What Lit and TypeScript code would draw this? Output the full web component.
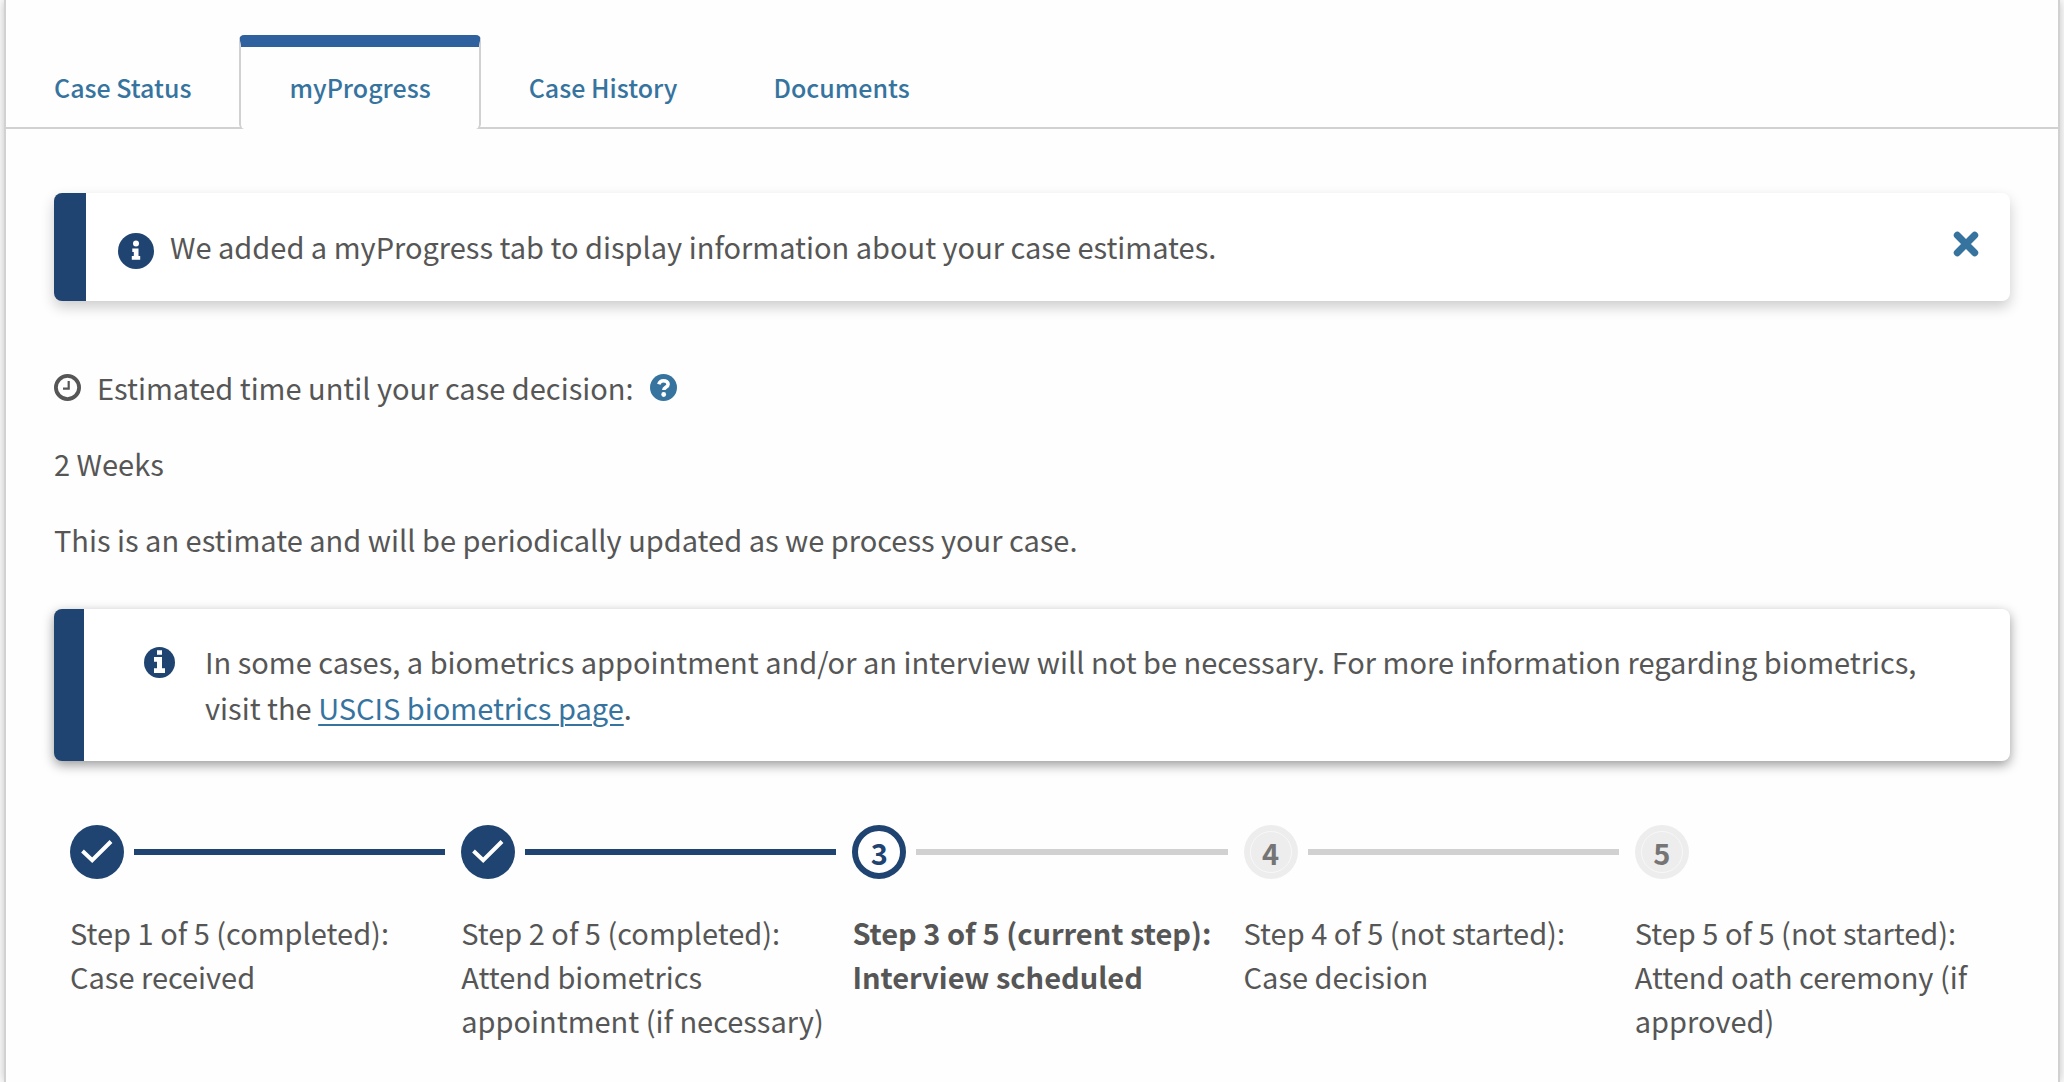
import { LitElement, html, css, svg } from "lit";
import { customElement, property, state } from "lit/decorators.js";

type StepStatus = "completed" | "current" | "not-started";
interface Step { title: string; status: StepStatus; }

const STATUS_LABEL: Record<StepStatus, string> = {
  completed: "completed",
  current: "current step",
  "not-started": "not started",
};

const infoRound = svg`
  <circle cx="18" cy="18" r="18" fill="currentColor"/>
  <circle cx="18" cy="10.5" r="3" fill="#fff"/>
  <path d="M14.300 15.400h6.200v7.600h1.700v3.800h-8.400V23h2v-4h-1.500z" fill="#fff"/>`;

const infoSquare = svg`
  <circle cx="15.500" cy="15.500" r="15.500" fill="currentColor"/>
  <path d="M13 3.300h5v4.400h-5zM10 10h8v11.200h3V26H10v-4.800h3v-6.400h-3z" fill="#fff"/>`;

@customElement("progress-steps")
export class ProgressSteps extends LitElement {
  @property({ attribute: false }) steps: Step[] = [];

  static styles = css`
    :host { display: block; }
    .steps {
      display: grid;
      grid-template-columns: repeat(5, minmax(0, 1fr));
      list-style: none;
      margin: 0;
      padding: 0;
    }
    .step { padding-left: 16px; }
    .track { display: flex; align-items: center; gap: 10px; height: 54px; }
    .dot {
      box-sizing: border-box;
      width: 54px;
      height: 54px;
      flex: none;
      border-radius: 50%;
      display: grid;
      place-items: center;
      font-size: 29px;
      line-height: 42px;
      font-weight: 700;
    }
    .dot.completed { background: #1f4471; }
    .dot.current { border: 6px solid #1f4471; color: #1f4471; background: #fff; }
    .dot.not-started { background: #ededed; color: #757575; }
    .num {
      box-sizing: border-box;
      width: 42px;
      height: 42px;
      border: 1px solid transparent;
      border-radius: 50%;
      line-height: 40px;
      text-align: center;
    }
    .not-started .num { border-color: #f8f8f8; }
    .line { flex: 1; height: 6px; background: #d1d1d1; }
    .line.done { background: #1f4471; }
    .label { margin-top: 31px; font-size: 29px; line-height: 44px; }
    .label.current { font-weight: 700; }
  `;

  render() {
    const total = this.steps.length;
    return html`<ol class="steps">
      ${this.steps.map((s, i) => html`<li class="step">
        <div class="track">
          <span class="dot ${s.status}">${s.status === "completed"
            ? html`<svg width="54" height="54" viewBox="0 0 54 54" aria-hidden="true"><path d="M12.500 26l9.700 9.200L41 16.500" fill="none" stroke="#fff" stroke-width="4"/></svg>`
            : html`<span class="num">${i + 1}</span>`}</span>
          ${i < total - 1 ? html`<span class="line ${s.status === "completed" ? "done" : ""}"></span>` : ""}
        </div>
        <div class="label ${s.status}">Step ${i + 1} of ${total} (${STATUS_LABEL[s.status]}):<br>${s.title}</div>
      </li>`)}
    </ol>`;
  }
}

@customElement("app-root")
export class AppRoot extends LitElement {
  @state() private active = "myProgress";
  @state() private showNotice = true;

  private tabs = ["Case Status", "myProgress", "Case History", "Documents"];
  private steps: Step[] = [
    { title: "Case received", status: "completed" },
    { title: "Attend biometrics appointment (if necessary)", status: "completed" },
    { title: "Interview scheduled", status: "current" },
    { title: "Case decision", status: "not-started" },
    { title: "Attend oath ceremony (if approved)", status: "not-started" },
  ];

  static styles = css`
    :host {
      display: block;
      box-sizing: border-box;
      min-height: 100vh;
      padding: 0 4px;
      background: #fefefe;
      color: #565656;
      font-family: "Noto Sans CJK SC", "Noto Sans", sans-serif;
      font-size: 29px;
      line-height: 46px;
    }
    .card {
      box-sizing: border-box;
      min-height: 100vh;
      border: solid #d1d1d1;
      border-width: 0 2px;
      background: #fefefe;
      box-shadow: 0 0 10px rgba(0, 0, 0, 0.25);
    }
    .tabs {
      display: flex;
      align-items: flex-end;
      padding-top: 35px;
      box-shadow: inset 0 -2px #d1d1d1;
    }
    .tab {
      box-sizing: border-box;
      height: 94px;
      margin: 0;
      padding: 12px 48px 2px;
      border: 0;
      background: none;
      color: #36749f;
      font: 500 25px/40px "Noto Sans CJK SC", "Noto Sans", sans-serif;
      cursor: pointer;
    }
    .tab.active {
      padding-top: 0;
      border: solid #d1d1d1;
      border-width: 12px 2px 0;
      border-top-color: #2e619e;
      border-radius: 5px;
      background: #fefefe;
    }
    .panel { padding: 64px 48px 32px; }
    .notice {
      display: flex;
      align-items: flex-start;
      border-left: 32px solid #1f4471;
      border-radius: 8px;
      background: #fff;
    }
    .notice.new {
      padding: 30px 28px 32px 32px;
      gap: 16px;
      box-shadow: 0 6px 14px rgba(0, 0, 0, 0.2);
    }
    .notice.new .icon { align-self: flex-end; }
    .notice.bio {
      margin: 47px 0 64px;
      border-left-width: 30px;
      padding: 29px 60px 31px;
      gap: 30px;
      box-shadow: 0 4px 12px rgba(0, 0, 0, 0.4);
    }
    .notice.bio .icon { margin-top: 9px; }
    .notice p { margin: 0; flex: 1; }
    .icon { color: #1f4471; flex: none; }
    .close {
      display: grid;
      place-items: center;
      width: 32px;
      height: 42px;
      padding: 0;
      border: 0;
      background: none;
      color: #36749f;
      cursor: pointer;
    }
    .estimate { display: flex; align-items: center; gap: 16px; margin-top: 63px; }
    .help { display: grid; padding: 0; border: 0; background: none; color: #36749f; cursor: pointer; }
    .text { margin: 30px 0 0; }
    a { color: #36749f; text-decoration-thickness: 2px; text-underline-offset: 4px; }
  `;

  render() {
    return html`<main class="card">
      <div class="tabs" role="tablist">
        ${this.tabs.map((t) => html`<button class="tab ${t === this.active ? "active" : ""}" role="tab"
          aria-selected=${t === this.active} @click=${() => (this.active = t)}>${t}</button>`)}
      </div>
      <section class="panel" role="tabpanel">
        ${this.showNotice ? html`<div class="notice new">
          <svg class="icon" width="36" height="36" viewBox="0 0 36 36" aria-hidden="true">${infoRound}</svg>
          <p>We added a myProgress tab to display information about your case estimates.</p>
          <button class="close" aria-label="Close" @click=${() => (this.showNotice = false)}>
            <svg width="26" height="26" viewBox="0 0 26 26" aria-hidden="true"><path d="M4.300 4.300l17.400 17.400M21.700 4.300L4.300 21.700" stroke="currentColor" stroke-width="7" stroke-linecap="round"/></svg>
          </button>
        </div>` : ""}
        <div class="estimate">
          <svg width="27" height="27" viewBox="0 0 27 27" aria-hidden="true"><circle cx="13.5" cy="13.5" r="11.6" fill="none" stroke="currentColor" stroke-width="3.8"/><path d="M14.700 7v7.700H9" fill="none" stroke="currentColor" stroke-width="2.200"/></svg>
          <span>Estimated time until your case decision:</span>
          <button class="help" aria-label="Help">
            <svg width="27" height="27" viewBox="0 0 27 27" aria-hidden="true"><circle cx="13.5" cy="13.500" r="13.500" fill="currentColor"/><path d="M8.800 10.200c.8-2.500 2.500-3.500 4.700-3.500 2.600 0 4.600 1.400 4.600 3.600 0 3-4.300 3-4.300 5.700" fill="none" stroke="#fff" stroke-width="3.600"/><circle cx="13.700" cy="20.500" r="2.400" fill="#fff"/></svg>
          </button>
        </div>
        <p class="text">2 Weeks</p>
        <p class="text">This is an estimate and will be periodically updated as we process your case.</p>
        <div class="notice bio">
          <svg class="icon" width="31" height="31" viewBox="0 0 31 31" aria-hidden="true">${infoSquare}</svg>
          <p>In some cases, a biometrics appointment and/or an interview will not be necessary. For more information regarding biometrics, visit the <a href="#biometrics">USCIS biometrics page</a>.</p>
        </div>
        <progress-steps .steps=${this.steps}></progress-steps>
      </section>
    </main>`;
  }
}
